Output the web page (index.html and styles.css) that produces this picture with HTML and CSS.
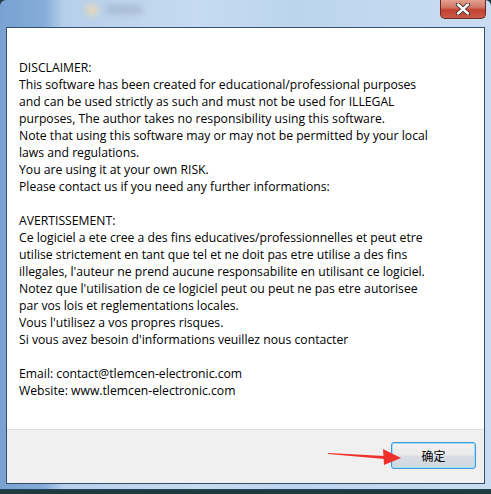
FILE: index.html
```html
<!DOCTYPE html>
<html>
    <head>
        <meta charset="UTF-8">
        <link rel="stylesheet" href="styles.css">
    </head>
    <body>
        <div class="window">
            <div class="titlebar">
                <div class="blur-icon"></div>
                <div class="blur-text"></div>
                <button class="close" title="Close">
                    <svg width="16" height="12" viewBox="0 0 16 12">
                        <path d="M3 1.5 L13 10.5 M13 1.5 L3 10.5" stroke="#3a2a2a" stroke-width="4.2" stroke-linecap="round"/>
                        <path d="M3 1.5 L13 10.5 M13 1.5 L3 10.5" stroke="#ffffff" stroke-width="2.4" stroke-linecap="round"/>
                    </svg>
                </button>
            </div>

            <div class="client">
                <div class="message">
                    <p>
                        DISCLAIMER:<br>
                        This software has been created for educational/professional purposes<br>
                        and can be used strictly as such and must not be used for ILLEGAL<br>
                        purposes, The author takes no responsibility using this software.<br>
                        Note that using this software may or may not be permitted by your local<br>
                        laws and regulations.<br>
                        You are using it at your own RISK.<br>
                        Please contact us if you need any further informations:<br>
                        <br>
                        AVERTISSEMENT:<br>
                        Ce logiciel a ete cree a des fins educatives/professionnelles et peut etre<br>
                        utilise strictement en tant que tel et ne doit pas etre utilise a des fins<br>
                        illegales, l'auteur ne prend aucune responsabilite en utilisant ce logiciel.<br>
                        Notez que l'utilisation de ce logiciel peut ou peut ne pas etre autorisee<br>
                        par vos lois et reglementations locales.<br>
                        Vous l'utilisez a vos propres risques.<br>
                        Si vous avez besoin d'informations veuillez nous contacter<br>
                        <br>
                        Email: contact@tlemcen-electronic.com<br>
                        Website: www.tlemcen-electronic.com
                    </p>
                </div>
                <div class="footer">
                    <button class="ok">确定</button>
                </div>
            </div>

            <!-- red arrow pointing at the button -->
            <svg class="arrow" width="80" height="20" viewBox="0 0 80 20">
                <polygon points="0,5 57,8 57,11 0,6" fill="#f0302a"/>
                <polygon points="55,1 73,10 56,17" fill="#f0302a"/>
            </svg>
        </div>
    </body>
</html>
```

FILE: styles.css
```css
body {
    margin: 0;
    background: #1d3b3f;
    font-family: "Open Sans", "Noto Sans CJK SC", sans-serif;
}

/* Aero frame */
.window {
    position: relative;
    width: 491px;
    height: 490px;
    box-sizing: border-box;
    padding: 0 6px 5px 6px;
    background: linear-gradient(to right, #79a2d2 0%, #86acd8 9%, #b7cfea 13%, #c6dbf0 40%, #bcd4ee 60%, #c9ddf1 100%);
    border-bottom: 1px solid #274055;
    border-radius: 6px 6px 0 0;
}

.titlebar {
    position: relative;
    height: 27px;
}

.blur-icon {
    position: absolute;
    left: 80px;
    top: 4px;
    width: 12px;
    height: 12px;
    border-radius: 6px;
    background: #e7d9b7;
    filter: blur(3px);
}

.blur-text {
    position: absolute;
    left: 100px;
    top: 5px;
    width: 36px;
    height: 9px;
    background: #a9bcd4;
    filter: blur(3px);
}

.close {
    position: absolute;
    right: -1px;
    top: 0;
    width: 46px;
    height: 19px;
    padding: 0;
    border: 1px solid #6b2a22;
    border-top: none;
    border-radius: 0 0 5px 5px;
    background: linear-gradient(to bottom, #e3a08f 0%, #d2796a 40%, #c4422f 55%, #c95a48 100%);
    display: flex;
    align-items: center;
    justify-content: center;
}

/* client area */
.client {
    border: 1px solid #34506e;
    display: flex;
    flex-direction: column;
    height: 457px;
    box-sizing: border-box;
}

.message {
    flex: 1;
    background: #ffffff;
    padding: 31px 12px 0 12px;
}

.message p {
    margin: 0;
    font-size: 12.2px;
    line-height: 17px;
    color: #000000;
}

.footer {
    height: 54px;
    background: #f0f0f0;
    border-top: 1px solid #dfdfdf;
    display: flex;
    justify-content: flex-end;
    padding: 12px 8px 0 0;
    box-sizing: border-box;
}

.ok {
    width: 85px;
    height: 27px;
    border: 1px solid #3c9be0;
    border-radius: 3px;
    box-shadow: inset 0 0 0 1px #a4dcf8;
    background: linear-gradient(to bottom, #f2f2f2 0%, #eaeaea 48%, #d9dee4 52%, #cfd8e0 100%);
    font-family: "Noto Sans CJK SC", sans-serif;
    font-size: 12px;
    color: #000000;
    padding: 0;
}

.arrow {
    position: absolute;
    left: 328px;
    top: 448px;
}
```
